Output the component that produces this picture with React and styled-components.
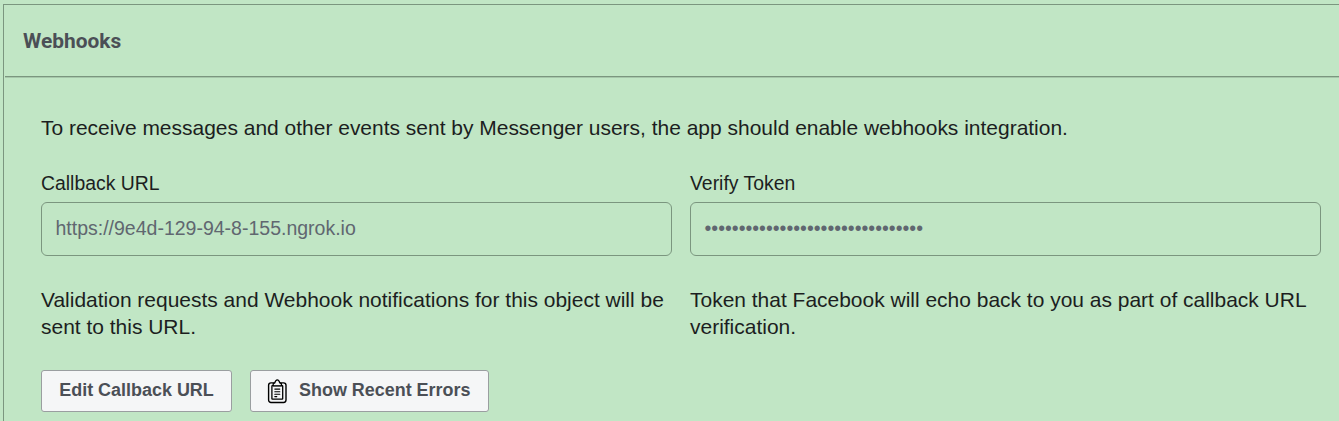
import React from "react";
import styled, { createGlobalStyle } from "styled-components";

const GlobalStyle = createGlobalStyle`
  * { box-sizing: border-box; }
  html, body { margin: 0; background: #c1e6c5; overflow: hidden; }
  body { font-family: "Liberation Sans", Arial, sans-serif; color: #1c1e21; }
`;

const Page = styled.main`
  height: 421px;
  padding: 4px 0 0 3px;
  overflow: hidden;
`;

const Card = styled.section`
  height: 440px;
  border: 1px solid #7b967f;
  border-right: 0;
`;

const CardHeader = styled.header`
  height: 72px;
  margin-left: 1px;
  padding: 24px 18px 0;
  border-bottom: 1px solid #7b967f;
  box-shadow: 0 1px 0 #a6c7aa;
`;

const Title = styled.h2`
  margin: 0;
  font: 700 20.9px/24px Roboto, sans-serif;
  color: #4b4f56;
`;

const CardBody = styled.div`
  padding: 37px 18px 0 37px;
`;

const Text = styled.p`
  margin: 0;
  font-size: 20.97px;
  line-height: 27px;
  white-space: nowrap;
`;

const Columns = styled.div`
  display: grid;
  grid-template-columns: 631px 631px;
  column-gap: 18px;
  margin-top: 29px;
`;

const Label = styled.label`
  display: block;
  font-size: 19.4px;
  line-height: 27px;
`;

const Field = styled.div`
  display: flex;
  align-items: center;
  height: 54px;
  margin: 5px 0 30px;
  padding: 0 13.5px 2px;
  border: 1px solid #7b967f;
  border-radius: 6px;
  font-size: 19.5px;
  color: #606770;
`;

const Actions = styled.div`
  display: flex;
  gap: 18px;
  margin-top: 30px;
`;

const Button = styled.button`
  display: flex;
  align-items: center;
  justify-content: ${(p) => (p.$icon ? "flex-start" : "center")};
  gap: 11px;
  width: ${(p) => p.$width}px;
  height: 42px;
  padding: ${(p) => (p.$icon ? "0 0 2px 16px" : "0 0 2px")};
  border: 1px solid #9a9ea0;
  border-radius: 3px;
  background: #f5f6f7;
  color: #4b4f56;
  font: 700 17.95px/24px "Liberation Sans", Arial, sans-serif;
  white-space: nowrap;
`;

const Icon = styled.svg`
  flex: none;
  margin-top: 4px;
`;

const ClipboardIcon = () => (
  <Icon width="21" height="26" viewBox="0 0 21 26" fill="none" stroke="#000" strokeLinecap="round" strokeLinejoin="round">
    <rect x="1.6" y="3.9" width="17.4" height="19.6" rx="2.4" strokeWidth="1.4" />
    <rect x="4.9" y="6.6" width="10.8" height="13.6" rx="0.5" strokeWidth="1.3" />
    <path d="M6.2 6.8V4.7l1.6-.8C8.3 1.9 9 .8 10.3.8s2 1.1 2.5 3.1l1.6.8v2.1z" fill="#f5f6f7" strokeWidth="1.3" />
    <path d="M7.8 10.1h5M7.8 12.7h5M7.8 15.3h5M7.8 17.6h2" strokeWidth="1.1" />
  </Icon>
);

export default function App() {
  return (
    <Page>
      <GlobalStyle />
      <Card>
        <CardHeader>
          <Title>Webhooks</Title>
        </CardHeader>
        <CardBody>
          <Text>To receive messages and other events sent by Messenger users, the app should enable webhooks integration.</Text>
          <Columns>
            <div>
              <Label>Callback URL</Label>
              <Field>https://9e4d-129-94-8-155.ngrok.io</Field>
              <Text>Validation requests and Webhook notifications for this object will be<br />sent to this URL.</Text>
            </div>
            <div>
              <Label>Verify Token</Label>
              <Field>{"•".repeat(32)}</Field>
              <Text>Token that Facebook will echo back to you as part of callback URL<br />verification.</Text>
            </div>
          </Columns>
          <Actions>
            <Button $width={191}>Edit Callback URL</Button>
            <Button $width={239} $icon>
              <ClipboardIcon />
              Show Recent Errors
            </Button>
          </Actions>
        </CardBody>
      </Card>
    </Page>
  );
}
